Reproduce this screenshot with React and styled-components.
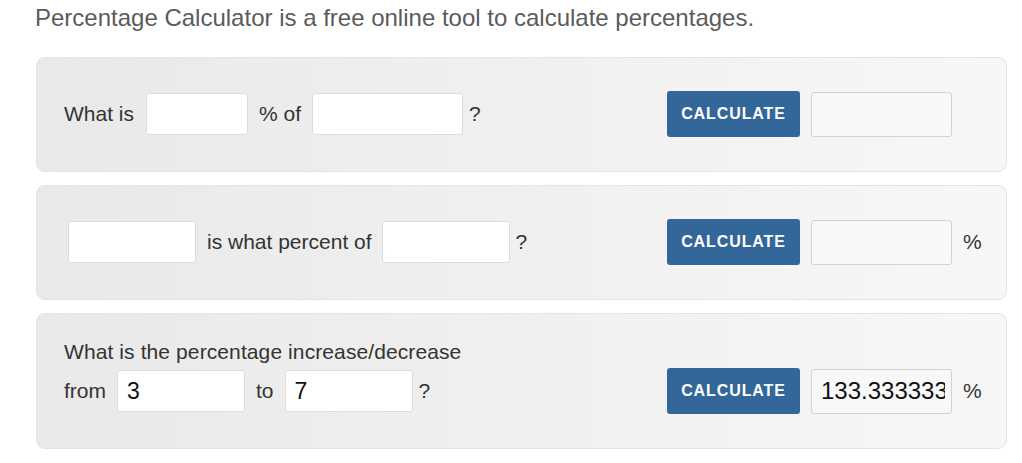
import React from 'react';
import styled, { createGlobalStyle } from 'styled-components';

const GlobalStyle = createGlobalStyle`
  body {
    margin: 0;
    background: #fff;
    font-family: "Liberation Sans", Arial, sans-serif;
  }
`;

const Page = styled.div`
  width: 972px;
  padding: 3px 0 0 35px;
`;

const Intro = styled.p`
  margin: 0 0 24px;
  font-size: 24px;
  line-height: 30px;
  color: #5b5b5b;
`;

const Panel = styled.div`
  display: flex;
  align-items: flex-end;
  margin: 0 0 13px 1px;
  padding: ${p => (p.$tall ? '28px' : '33px')} 27px 34px;
  border: 1px solid #e4e4e4;
  border-radius: 9px;
  background: linear-gradient(to right, #e9e9e9, #f7f7f7);
  color: #333;
  font-size: 21px;
`;

const Question = styled.div`
  flex: 0 0 603px;
  display: flex;
  flex-direction: column;
  gap: 6px;
`;

const Heading = styled.div`
  line-height: 20px;
  letter-spacing: 0.1px;
`;

const Row = styled.div`
  display: flex;
  align-items: center;
  height: 46px;
  padding-left: ${p => p.$indent || 0}px;
`;

const Label = styled.span`
  margin: 0 ${p => p.$after ?? 11}px 0 ${p => p.$gap ?? 11}px;
  white-space: nowrap;
`;

const Field = styled.input`
  box-sizing: border-box;
  width: ${p => p.$w}px;
  height: 42px;
  padding: 0 9px;
  border: 1px solid #dcdcdc;
  border-radius: 3px;
  background: #fff;
  font: 23px "Liberation Sans", Arial, sans-serif;
  color: #111;
  outline: none;
`;

const Answer = styled.div`
  display: flex;
  align-items: center;
  height: 46px;
`;

const Button = styled.button`
  width: 133px;
  height: 46px;
  border: none;
  border-radius: 3px;
  background: #336699;
  color: #fff;
  font: bold 16px "Liberation Sans", Arial, sans-serif;
  letter-spacing: 0.9px;
  text-transform: uppercase;
  cursor: pointer;
`;

const Result = styled.input`
  box-sizing: border-box;
  width: 141px;
  height: 45px;
  margin-left: 11px;
  padding: 0 6px 0 9px;
  border: 1px solid #d2d2d2;
  border-radius: 3px;
  background: #f8f8f8;
  font: 24px "Liberation Sans", Arial, sans-serif;
  color: #111;
  outline: none;
`;

const Unit = styled.span`
  margin-left: 11px;
  font-size: 21px;
  color: #333;
`;

const App = () => (
  <Page>
    <GlobalStyle />
    <Intro>Percentage Calculator is a free online tool to calculate percentages.</Intro>

    <Panel>
      <Question>
        <Row>
          <Label $gap={0} $after={12}>What is</Label>
          <Field $w={102} />
          <Label>% of</Label>
          <Field $w={151} />
          <Label $gap={6}>?</Label>
        </Row>
      </Question>
      <Answer>
        <Button>Calculate</Button>
        <Result readOnly />
      </Answer>
    </Panel>

    <Panel>
      <Question>
        <Row $indent={4}>
          <Field $w={128} />
          <Label $after={10}>is what percent of</Label>
          <Field $w={128} />
          <Label $gap={6}>?</Label>
        </Row>
      </Question>
      <Answer>
        <Button>Calculate</Button>
        <Result readOnly />
        <Unit>%</Unit>
      </Answer>
    </Panel>

    <Panel $tall>
      <Question>
        <Heading>What is the percentage increase/decrease</Heading>
        <Row>
          <Label $gap={0}>from</Label>
          <Field $w={128} defaultValue="3" />
          <Label>to</Label>
          <Field $w={128} defaultValue="7" />
          <Label $gap={6}>?</Label>
        </Row>
      </Question>
      <Answer>
        <Button>Calculate</Button>
        <Result readOnly value="133.333333" />
        <Unit>%</Unit>
      </Answer>
    </Panel>
  </Page>
);

export default App;
